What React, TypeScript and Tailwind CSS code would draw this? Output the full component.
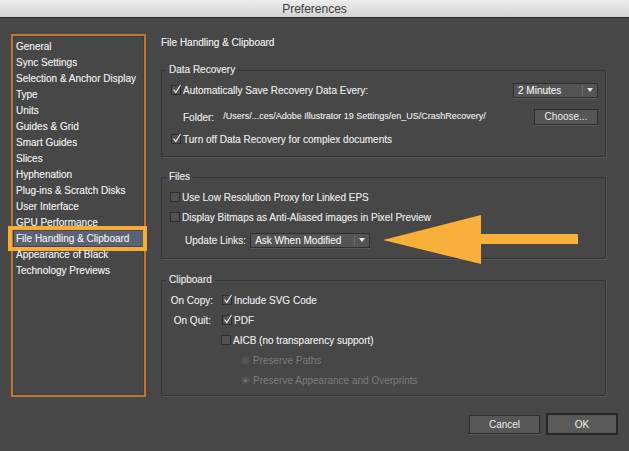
import React from 'react';

const sections = [
  'General',
  'Sync Settings',
  'Selection & Anchor Display',
  'Type',
  'Units',
  'Guides & Grid',
  'Smart Guides',
  'Slices',
  'Hyphenation',
  'Plug-ins & Scratch Disks',
  'User Interface',
  'GPU Performance',
  'File Handling & Clipboard',
  'Appearance of Black',
  'Technology Previews',
];

const Check = ({ checked }: { checked?: boolean }) => (
  <span className="relative inline-block w-[10px] h-[10px] shrink-0 border border-[#2e2e2e] bg-[#515151]">
    {checked && (
      <svg className="absolute left-[0px] top-[-2px]" width="10" height="10" viewBox="0 0 10 10">
        <path d="M1.5 5.5 L3.8 8.5 L8.5 1" fill="none" stroke="#f0f0f0" strokeWidth="1.2" />
      </svg>
    )}
  </span>
);

const Radio = ({ dot }: { dot?: boolean }) => (
  <span className="inline-flex items-center justify-center w-[9px] h-[9px] shrink-0 rounded-full bg-[#555555] border border-[#4c4c4c]">
    {dot && <span className="w-[3px] h-[3px] rounded-full bg-[#777777]" />}
  </span>
);

const Dropdown = ({ label, width }: { label: string; width: string }) => (
  <div className={`${width} h-[15px] flex items-center bg-[#545454] border border-[#2f2f2f] shadow-[0_1px_0_#5a5a5a]`}>
    <span className="flex-1 pl-[4px] text-[10px] leading-[13px] text-[#ececec]">{label}</span>
    <span className="w-px h-[11px] bg-[#6a6a6a]" />
    <span className="w-[14px] flex justify-center">
      <svg width="6" height="4" viewBox="0 0 6 4">
        <path d="M0 0 H6 L3 4 Z" fill="#e6e6e6" />
      </svg>
    </span>
  </div>
);

const Group = ({ title, className, children }: { title: string; className: string; children: React.ReactNode }) => (
  <fieldset className={`border border-[#353535] rounded-[2px] shadow-[1px_1px_0_#555555] ${className}`}>
    <legend className="ml-[4px] px-[3px] text-[10px] leading-[14px] text-[#e6e6e6]">{title}</legend>
    {children}
  </fieldset>
);

export default function App() {
  return (
    <div
      className="relative w-[629px] h-[451px] bg-[#474747] flex flex-col overflow-hidden text-[#e6e6e6] [text-shadow:0_0_0.5px_rgba(230,230,230,0.6)]"
      style={{ fontFamily: '"Liberation Sans", Arial, sans-serif' }}
    >
      <div className="h-[18px] shrink-0 flex items-center justify-center bg-gradient-to-b from-[#ededed] to-[#d3d3d3] border-b border-[#2b2b2b] [text-shadow:none]">
        <span className="text-[12px] text-[#404040]">Preferences</span>
      </div>

      <div className="flex-1 flex items-start pl-[11px] pt-[16px]">
        <div className="w-[135px] h-[363px] shrink-0 border-2 border-[#bd7632] shadow-[inset_0_0_0_1px_#3d3d3d] pt-[3px]">
          {sections.map((s) => {
            const selected = s === 'File Handling & Clipboard';
            return (
              <div key={s} className="relative h-[16px] flex items-center">
                {selected && (
                  <>
                    <span className="absolute left-[1px] right-[1px] top-0 bottom-[1px] bg-[#5a6376]" />
                    <span className="absolute left-[-5px] right-[-3px] top-[-5px] bottom-[-4px] border-4 border-[#f7ac39]" />
                  </>
                )}
                <span className="relative pl-[3px] text-[10px] leading-[14px] text-[#ececec] whitespace-nowrap">{s}</span>
              </div>
            );
          })}
        </div>

        <div className="ml-[15px] w-[445px] flex flex-col">
          <div className="mt-[2px] text-[10px] leading-[14px] text-[#ececec]">File Handling &amp; Clipboard</div>

          <Group title="Data Recovery" className="mt-[13px] pb-[7px]">
            <div className="flex flex-col pl-[9px] pr-[7px] text-[10px]">
              <div className="h-[20px] mt-[3px] flex items-center">
                <Check checked />
                <span className="ml-[2px]">Automatically Save Recovery Data Every:</span>
                <div className="ml-auto">
                  <Dropdown label="2 Minutes" width="w-[85px]" />
                </div>
              </div>
              <div className="h-[20px] mt-[7px] flex items-center">
                <span className="ml-[12px]">Folder:</span>
                <span className="ml-[9px] text-[9px]">/Users/...ces/Adobe Illustrator 19 Settings/en_US/CrashRecovery/</span>
                <button className="ml-auto w-[64px] h-[16px] bg-[#565656] border border-[#2e2e2e] text-[10px] leading-[14px] text-[#ececec] shadow-[0_1px_0_#5a5a5a]">
                  Choose...
                </button>
              </div>
              <div className="h-[20px] mt-[2px] flex items-center">
                <Check checked />
                <span className="ml-[2px]">Turn off Data Recovery for complex documents</span>
              </div>
            </div>
          </Group>

          <Group title="Files" className="mt-[13px] pb-[8px]">
            <div className="flex flex-col pl-[8px] text-[10px]">
              <div className="h-[20px] mt-[3px] flex items-center">
                <Check />
                <span className="ml-[2px]">Use Low Resolution Proxy for Linked EPS</span>
              </div>
              <div className="h-[20px] flex items-center">
                <Check />
                <span className="ml-[2px]">Display Bitmaps as Anti-Aliased images in Pixel Preview</span>
              </div>
              <div className="h-[20px] mt-[3px] flex items-center">
                <span className="ml-[15px]">Update Links:</span>
                <div className="ml-[4px]">
                  <Dropdown label="Ask When Modified" width="w-[120px]" />
                </div>
              </div>
            </div>
          </Group>

          <Group title="Clipboard" className="mt-[14px] pb-[5px]">
            <div className="flex flex-col text-[10px]">
              <div className="h-[20px] mt-[3px] flex items-center">
                <span className="w-[51px] text-right">On Copy:</span>
                <span className="ml-[9px] flex"><Check checked /></span>
                <span className="ml-[2px]">Include SVG Code</span>
              </div>
              <div className="h-[20px] flex items-center">
                <span className="w-[49px] text-right">On Quit:</span>
                <span className="ml-[11px] flex"><Check checked /></span>
                <span className="ml-[2px]">PDF</span>
              </div>
              <div className="h-[20px] flex items-center">
                <span className="ml-[59px] flex"><Check /></span>
                <span className="ml-[2px]">AICB (no transparency support)</span>
              </div>
              <div className="h-[20px] flex items-center text-[#7c7c7c] [text-shadow:none]">
                <span className="ml-[79px] flex"><Radio /></span>
                <span className="ml-[3px]">Preserve Paths</span>
              </div>
              <div className="h-[20px] flex items-center text-[#7c7c7c] [text-shadow:none]">
                <span className="ml-[79px] flex"><Radio dot /></span>
                <span className="ml-[3px]">Preserve Appearance and Overprints</span>
              </div>
            </div>
          </Group>
        </div>
      </div>

      <div className="h-[38px] shrink-0 flex items-start justify-end pr-[11px] gap-[6px]">
        <button className="mt-[2px] w-[71px] h-[19px] bg-[#575757] border border-[#2e2e2e] text-[10px] text-[#ececec] shadow-[0_1px_0_#5a5a5a]">
          Cancel
        </button>
        <button className="w-[72px] h-[22px] bg-[#5a5a5a] border-2 border-[#262626] text-[10px] text-[#f2f2f2]">
          OK
        </button>
      </div>

      <svg className="absolute left-[383px] top-[215px]" width="196" height="50" viewBox="0 0 196 50">
        <path d="M0 25 L98 0 L98 19 L195 19 L195 29 L98 29 L98 49 Z" fill="#f9b03b" />
      </svg>
    </div>
  );
}
